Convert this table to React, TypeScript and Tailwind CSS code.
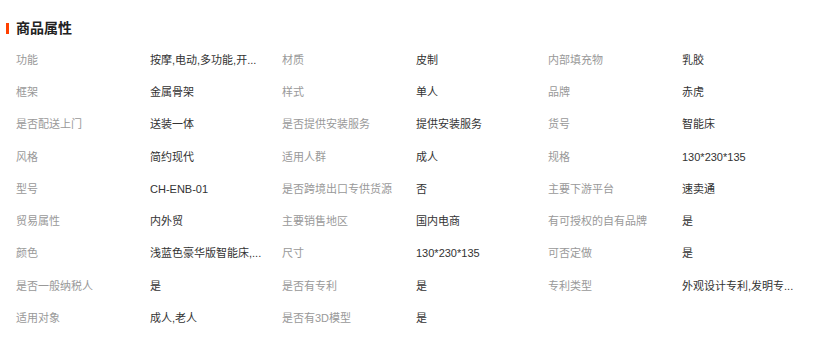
const attrs: [string, string][] = [
  ["功能", "按摩,电动,多功能,开..."],
  ["材质", "皮制"],
  ["内部填充物", "乳胶"],
  ["框架", "金属骨架"],
  ["样式", "单人"],
  ["品牌", "赤虎"],
  ["是否配送上门", "送装一体"],
  ["是否提供安装服务", "提供安装服务"],
  ["货号", "智能床"],
  ["风格", "简约现代"],
  ["适用人群", "成人"],
  ["规格", "130*230*135"],
  ["型号", "CH-ENB-01"],
  ["是否跨境出口专供货源", "否"],
  ["主要下游平台", "速卖通"],
  ["贸易属性", "内外贸"],
  ["主要销售地区", "国内电商"],
  ["有可授权的自有品牌", "是"],
  ["颜色", "浅蓝色豪华版智能床,..."],
  ["尺寸", "130*230*135"],
  ["可否定做", "是"],
  ["是否一般纳税人", "是"],
  ["是否有专利", "是"],
  ["专利类型", "外观设计专利,发明专..."],
  ["适用对象", "成人,老人"],
  ["是否有3D模型", "是"],
];

const App = () => {
  return (
    <div className="w-[831px] h-[337px] bg-white overflow-hidden font-['Liberation_Sans','Noto_Sans_CJK_SC',sans-serif]">
      <div className="pt-[21px] pl-[6px] flex items-center h-[35px]">
        <span className="w-[3px] h-[11px] bg-[#ff4000]" />
        <h2 className="ml-[7px] text-[14px] font-bold text-[#222] leading-[14px]">商品属性</h2>
      </div>
      <div className="pl-[16px] pt-[9px] grid grid-cols-[134px_132px_134px_132px_134px_132px] text-[11px]">
        {attrs.map(([label, value]) => (
          <div key={label} className="contents">
            <div className="h-[32.25px] flex items-center text-[#999] whitespace-nowrap">{label}</div>
            <div className="h-[32.25px] flex items-center text-[#333] whitespace-nowrap overflow-hidden">
              {value}
            </div>
          </div>
        ))}
      </div>
    </div>
  );
};

export default App;
